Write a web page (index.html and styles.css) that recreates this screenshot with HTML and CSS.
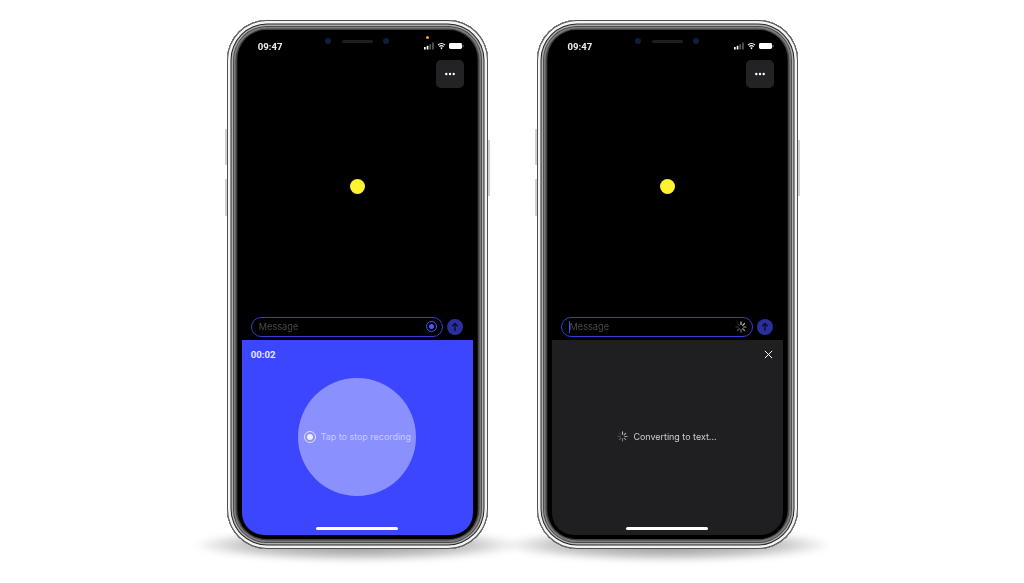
FILE: index.html
```html
<!DOCTYPE html>
<html lang="en">
<head>
<meta charset="utf-8">
<title>Voice message</title>
<link rel="stylesheet" href="styles.css">
</head>
<body>
<svg class="defs" width="0" height="0" aria-hidden="true">
  <symbol id="spin" viewBox="0 0 24 24">
    <g fill="none" stroke="#fff" stroke-width="2.4" stroke-linecap="round">
      <path d="M12 2v5" opacity="1"/><path d="M19 5l-3.5 3.5" opacity=".9"/><path d="M22 12h-5" opacity=".8"/><path d="M19 19l-3.5-3.5" opacity=".7"/>
      <path d="M12 22v-5" opacity=".55"/><path d="M5 19l3.5-3.5" opacity=".4"/><path d="M2 12h5" opacity=".3"/><path d="M5 5l3.5 3.5" opacity=".2"/>
    </g>
  </symbol>
  <symbol id="status" viewBox="0 0 40 8">
    <g fill="#fff"><rect x="0" y="5" width="1.7" height="2.5"/><rect x="2.7" y="3.8" width="1.7" height="3.7"/><rect x="5.4" y="2.2" width="1.7" height="5.3" opacity=".35"/><rect x="8.1" y=".6" width="1.7" height="6.9" opacity=".35"/></g>
    <path d="M14 3a5.4 5.4 0 0 1 7 0M15.3 4.6a3.4 3.4 0 0 1 4.4 0" fill="none" stroke="#fff" stroke-width="1.1"/><path d="M16.3 5.8l1.2 1.6 1.2-1.6a2 2 0 0 0-2.4 0z" fill="#fff"/>
    <rect x="25" y="1" width="13" height="6" rx="1.4" fill="#fff"/><rect x="38.5" y="3" width="1" height="2.2" rx=".5" fill="#fff" opacity=".5"/>
  </symbol>
  <symbol id="send" viewBox="0 0 16 16">
    <path d="M8 12V4.6M5.2 7.2L8 4.4l2.8 2.8" fill="none" stroke="#0b0b2a" stroke-width="1.3"/>
  </symbol>
  <symbol id="dots" viewBox="0 0 10 4">
    <g fill="#fff"><circle cx="1.3" cy="2" r="1.2"/><circle cx="5" cy="2" r="1.2"/><circle cx="8.7" cy="2" r="1.2"/></g>
  </symbol>
</svg>
<main class="stage">

  <article class="device">
    <span class="shadow"></span>
    <span class="side side-l1"></span><span class="side side-l2"></span><span class="side side-r"></span>
    <div class="phone">
      <div class="screen">
        <header class="status">
          <span class="clock">09:47</span>
          <div class="notch"><i class="lens"></i><i class="speaker"></i><i class="lens"></i></div>
          <svg class="status-icons"><use href="#status"/></svg>
          <i class="privacy"></i>
        </header>
        <div class="menu-row"><button class="menu"><svg class="menu-dots"><use href="#dots"/></svg></button></div>
        <div class="canvas"><span class="orb"></span></div>
        <div class="composer">
          <div class="field">
            <span class="placeholder">Message</span>
            <span class="rec-mini"></span>
          </div>
          <span class="send"><svg width="16" height="16"><use href="#send"/></svg></span>
        </div>
        <section class="sheet sheet-blue">
          <div class="sheet-top"><span class="timer">00:02</span></div>
          <div class="sheet-body">
            <button class="stop-circle"><span class="rec-icon"></span><span class="stop-label">Tap to stop recording</span></button>
          </div>
          <span class="home"></span>
        </section>
      </div>
    </div>
  </article>

  <article class="device">
    <span class="shadow"></span>
    <span class="side side-l1"></span><span class="side side-l2"></span><span class="side side-r"></span>
    <div class="phone">
      <div class="screen">
        <header class="status">
          <span class="clock">09:47</span>
          <div class="notch"><i class="lens"></i><i class="speaker"></i><i class="lens"></i></div>
          <svg class="status-icons"><use href="#status"/></svg>
        </header>
        <div class="menu-row"><button class="menu"><svg class="menu-dots"><use href="#dots"/></svg></button></div>
        <div class="canvas"><span class="orb"></span></div>
        <div class="composer">
          <div class="field">
            <span class="caret"></span><span class="placeholder">Message</span>
            <svg class="spin-mini"><use href="#spin"/></svg>
          </div>
          <span class="send"><svg width="16" height="16"><use href="#send"/></svg></span>
        </div>
        <section class="sheet sheet-dark">
          <div class="sheet-top sheet-top-end">
            <svg class="close" viewBox="0 0 10 10"><path d="M1 1l8 8M9 1l-8 8" fill="none" stroke="#fff" stroke-width="1.1"/></svg>
          </div>
          <div class="sheet-body">
            <div class="converting"><svg class="spin-large"><use href="#spin"/></svg><span>Converting to text...</span></div>
          </div>
          <span class="home"></span>
        </section>
      </div>
    </div>
  </article>

</main>
</body>
</html>
```
FILE: styles.css
```css
* { box-sizing: border-box; }
html, body { margin: 0; height: 100%; background: #fff; overflow: hidden; }
body { font-family: Inter, "Liberation Sans", sans-serif; }
.defs { position: absolute; }
i { display: block; }
button { border: 0; padding: 0; font: inherit; }

.stage {
  display: flex;
  gap: 48.75px;
  padding: 20px 0 0 226.75px;
}
.device { position: relative; width: 261px; height: 529px; }

.shadow {
  position: absolute;
  left: -32px; right: -32px; bottom: -12px;
  height: 32px;
  border-radius: 50%;
  background: radial-gradient(ellipse at center, rgba(0,0,0,.42) 0%, rgba(0,0,0,.22) 50%, rgba(0,0,0,0) 72%);
  filter: blur(3px);
}
.side { position: absolute; width: 3px; background: #cfcfcf; border-radius: 1px; }
.side-l1 { left: -2px; top: 109px; height: 36px; }
.side-l2 { left: -2px; top: 159px; height: 37px; }
.side-r { right: -2px; top: 120px; height: 56px; }

.phone {
  position: relative;
  width: 261px;
  height: 529px;
  padding: 10px 11px;
  border-radius: 40px;
  background: #000;
  filter: blur(.4px);
  box-shadow:
    inset 0 0 0 1px #505050,
    inset 0 0 0 3.5px #f4f4f4,
    inset 0 0 0 4.5px #262626,
    inset 0 0 0 6px #b0b0b0,
    inset 0 0 0 6.7px #3c3c3c,
    inset 0 0 0 8.5px #7c7c7c,
    inset 0 0 0 10px #444,
    inset 0 0 0 11px #141414;
}
.screen {
  height: 509px;
  display: flex;
  flex-direction: column;
  background: #000;
  border-radius: 28px;
  color: #fff;
}

.status {
  position: relative;
  height: 30px;
  display: flex;
  align-items: flex-start;
  justify-content: space-between;
  padding: 0 13px 0 20px;
}
.clock { font-family: Roboto, "Liberation Sans", sans-serif; font-size: 9.6px; font-weight: 700; line-height: 12px; margin-top: 11px; width: 33px; color: #eee; }
.notch { display: flex; align-items: center; gap: 10.5px; margin-top: 8px; height: 6px; }
.lens { width: 6px; height: 6px; border-radius: 50%; background: #101c40; }
.speaker { width: 31px; height: 3px; border-radius: 2px; background: #1e1e1e; }
.status-icons { width: 40px; height: 8px; margin-top: 12px; }
.privacy {
  position: absolute;
  right: 48px; top: 6px;
  width: 3px; height: 3px;
  border-radius: 50%;
  background: #f5a623;
}

.menu-row { display: flex; justify-content: flex-end; padding-right: 13px; }
.menu {
  width: 28px; height: 28px;
  display: flex; align-items: center; justify-content: center;
  border-radius: 5px;
  background: #232325;
}
.menu-dots { width: 10px; height: 4px; }

.canvas {
  height: 229px;
  padding-bottom: 32px;
  display: flex;
  align-items: center;
  justify-content: center;
}
.orb { width: 15px; height: 15px; border-radius: 50%; background: #fff22e; }

.composer {
  display: flex;
  align-items: center;
  gap: 4px;
  height: 20px;
  margin-bottom: 3px;
  padding-left: 13px;
}
.field {
  width: 192px; height: 20px;
  display: flex; align-items: center;
  padding: 0 5px 1px 7px;
  border: 1.3px solid #3a3ad6;
  border-radius: 10px;
}
.placeholder { flex: 1; font-size: 9.2px; color: #4a4a4a; }
.caret { width: 1px; height: 12px; background: #3d45ff; }
.rec-mini {
  width: 11px; height: 11px;
  border: 1px solid #4a55ff;
  border-radius: 50%;
  display: flex; align-items: center; justify-content: center;
}
.rec-mini::after { content: ""; width: 5px; height: 5px; border-radius: 50%; background: #4a55ff; }
.spin-mini { width: 12px; height: 12px; opacity: .8; }
.send { width: 16px; height: 16px; border-radius: 50%; background: #2a2f9e; }
.send svg { display: block; }

.sheet {
  height: 195px;
  margin: 0 4px;
  display: flex;
  flex-direction: column;
  border-radius: 0 0 22px 22px;
}
.sheet-blue { background: #3d46ff; }
.sheet-dark { background: #1f1f21; }
.sheet-top { height: 21px; padding: 8px 9px 0; display: flex; align-items: center; }
.sheet-top-end { justify-content: flex-end; padding: 8px 10px 0; }
.timer { font-family: Roboto, "Liberation Sans", sans-serif; font-size: 9.6px; font-weight: 700; color: #e6e8ff; line-height: 13px; }
.close { width: 9px; height: 9px; }
.sheet-body {
  height: 118px;
  margin-top: 17px;
  display: flex;
  align-items: center;
  justify-content: center;
}
.stop-circle {
  width: 118px; height: 118px;
  border-radius: 50%;
  background: #8b90ff;
  color: #c9ccff;
  display: flex; align-items: center; justify-content: center; gap: 5px;
  white-space: nowrap;
}
.rec-icon {
  width: 12px; height: 12px;
  border: 1px solid #dfe0ff;
  border-radius: 50%;
  display: flex; align-items: center; justify-content: center;
}
.rec-icon::after { content: ""; width: 6px; height: 6px; border-radius: 50%; background: #eeeeff; }
.stop-label { font-size: 8.95px; padding-bottom: 1px; }
.converting { display: flex; align-items: center; gap: 5px; font-size: 8.95px; color: #cfcfcf; padding-bottom: 1px; }
.spin-large { width: 11px; height: 11px; opacity: .7; }
.home {
  width: 82px; height: 2.5px;
  margin: 31px auto 0;
  border-radius: 2px;
  background: #fff;
}
```
